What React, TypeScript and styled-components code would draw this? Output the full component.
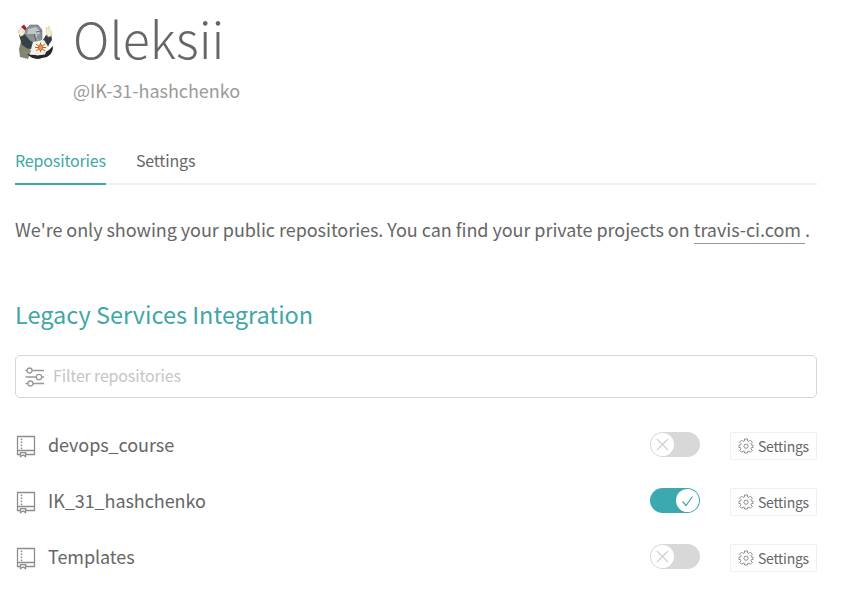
import React from "react";
import styled, { createGlobalStyle } from "styled-components";

const teal = "#3fa7a5";
const toggleTeal = "#3ba9af";
const Global = createGlobalStyle`
  *{box-sizing:border-box}
  body{margin:0;background:#fff;color:#666666;font-family:"Source Sans Pro","Noto Sans CJK SC",sans-serif;overflow:hidden}
`;
const Page = styled.main`width:802px;margin-left:15px;height:603px;display:flex;flex-direction:column;`;
const Header = styled.header`display:flex;height:144px;padding-top:6px;`;
const Avatar = styled.svg`width:40px;height:40px;margin:16px 17px 0 1px;flex:none;`;
const Identity = styled.div`display:flex;flex-direction:column;`;
const Name = styled.h1`margin:0;font-size:50px;font-weight:300;letter-spacing:.1px;line-height:62px;height:71px;white-space:nowrap;`;
const Handle = styled.span`font-size:18px;letter-spacing:-.04px;line-height:26px;color:#9b9b9b;white-space:nowrap;`;
const Tabs = styled.nav`display:flex;gap:30px;height:41px;border-bottom:2px solid #efefef;flex:none;`;
const Tab = styled.a<{ $active?: boolean }>`
  font-size:16px;letter-spacing:-.16px;line-height:32px;height:41px;white-space:nowrap;
  color:${p => (p.$active ? teal : "inherit")};
  border-bottom:2px solid ${p => (p.$active ? teal : "transparent")};
`;
const Notice = styled.p`margin:30px 0 0;font-size:18px;letter-spacing:-.045px;line-height:28px;white-space:nowrap;height:28px;`;
const NoticeLink = styled.a`display:inline-block;line-height:28px;height:29px;vertical-align:top;border-bottom:1px solid #999;white-space:pre;`;
const Heading = styled.h2`margin:54px 0 0;font-size:23.5px;font-weight:400;line-height:34px;height:58px;color:${teal};white-space:nowrap;`;
const Filter = styled.label`display:flex;align-items:center;height:43px;border:1px solid #d4d6d8;border-radius:5px;padding-left:9px;gap:8px;flex:none;`;
const FilterInput = styled.input`
  border:0;outline:0;padding:0 0 3px;background:none;font:16px/24px "Source Sans Pro","Noto Sans CJK SC",sans-serif;letter-spacing:-.17px;flex:1;
  &::placeholder{color:#c5c5c5;opacity:1}
`;
const List = styled.ul`list-style:none;margin:20px 0 0;padding:0;`;
const Row = styled.li`display:flex;align-items:center;height:56px;`;
const RepoName = styled.span`flex:1;margin-left:12px;padding-bottom:4px;font-size:18px;letter-spacing:-.07px;line-height:28px;white-space:nowrap;`;
const Switch = styled.button<{ $on: boolean }>`
  width:50px;height:25px;border:0;border-radius:13px;padding:1px;margin:0 30px 3px 0;display:flex;
  justify-content:${p => (p.$on ? "flex-end" : "flex-start")};
  background:${p => (p.$on ? toggleTeal : "#d8d8d8")};
`;
const Knob = styled.span`width:23px;height:23px;border-radius:50%;background:#fff;display:flex;`;
const SettingsButton = styled.button`
  width:87px;height:28px;border:1px solid #efefef;border-radius:2px;background:#fff;padding:0 0 0 7px;
  display:flex;align-items:center;gap:4px;color:inherit;font:14px/24px "Source Sans Pro","Noto Sans CJK SC",sans-serif;letter-spacing:-.27px;
`;

const FilterIcon = () => (
  <svg width="20" height="22" viewBox="0 0 20 22" fill="none" stroke="#999" strokeWidth="1.3">
    <path d="M.5 4.500H2M7 4.500h12M.5 11H11M17 11h2M.5 17.500H3M8 17.500h11" />
    <circle cx="4.500" cy="4.500" r="2.500" /><circle cx="14" cy="11" r="2.700" /><circle cx="5.500" cy="17.500" r="2.500" />
  </svg>
);
const RepoIcon = () => (
  <svg width="21" height="24" viewBox="0 0 21 24" fill="none" stroke="#8d8d8d" strokeWidth="1.3">
    <path d="M5.500 20.500h-3v-18h17v18h-9M2.500 16.500h17" />
    <path d="M6.500 4.500v11" strokeDasharray="1.5 1.500" strokeWidth="1.500" />
    <path d="M5.500 18v4.500l2.500-1.500 2.500 1.500V18M5 18.700h6.500" />
  </svg>
);
const GearIcon = () => (
  <svg width="16" height="16" viewBox="0 0 16 16" fill="none" stroke="#8d8d8d" strokeWidth="1">
    <path strokeLinejoin="round" d="M6.500 1h3v1.900l1.400.600 1.400-1.400 2.100 2.100L13 5.600l.6 1.400h1.400v2.500h-1.400l-.6 1.400 1.400 1.400-2.100 2.100-1.400-1.400-1.400.6V15h-3v-1.400l-1.400-.6-1.400 1.400-2.100-2.100L3 10.900l-.6-1.400H1V7h1.400L3 5.600 1.600 4.200l2.100-2.100 1.400 1.400 1.400-.6z" />
    <circle cx="8" cy="8.200" r="2.100" />
  </svg>
);
const KnobIcon = ({ on }: { on: boolean }) => (
  <svg width="23" height="23" viewBox="0 0 23 23" fill="none" stroke={on ? toggleTeal : "#cfcfcf"} strokeWidth="1.2">
    <path d={on ? "M6.500 12.500l3.500 4L16.500 7.500" : "M6 6l11 11M17 6L6 17"} />
  </svg>
);
const AvatarArt = () => (
  <Avatar viewBox="0 0 40 40">
    <path d="M5 19l-2 8 1 8 8 2 3-8-5-10z" fill="#83856e" />
    <path d="M9 15l8 5 8 0 5-6 4 3-2 8-8 3-10-1-6-6z" fill="#235c36" />
    <path d="M3 13l5-2 5 6 3 8-4 2-6-4z" fill="#384149" />
    <path d="M29 14l6-3 1 7-4 6-4-3z" fill="#343d45" />
    <path d="M2.500 8l2-2 2 2 2 3-1 2-3 1.500-2-4z" fill="#f5eccf" stroke="#b6ae91" strokeWidth=".5" />
    <path d="M30 5l2 2 1-3 1 4 2 2-1 4-3 1-2-5z" fill="#f5eccf" stroke="#c9bf9b" strokeWidth=".5" />
    <path d="M5 5l3-2.500 3 4-2 2z" fill="#a51f2b" />
    <path d="M9 8l5-5 8 0 4 5 0 9-5 5-7-4-4-4z" fill="#8a9095" stroke="#656b70" strokeWidth=".6" />
    <path d="M12 7l8-2 4 4-2 10-3-7-8 0z" fill="#c1c5c7" />
    <path d="M20 10l5-1M18 12l2 7M22 12v5" stroke="#50565b" strokeWidth=".8" />
    <path d="M17 20l11-2 5 8-5 9-12 0-1-8z" fill="#f5f1e6" />
    <path d="M24.500 20.500v10M20 22l9 7M29 22l-9 7M19 25.500h11" stroke="#c2602e" strokeWidth="1" />
    <ellipse cx="24.500" cy="25.500" rx="2" ry="3" fill="#e79b38" stroke="#ba4a22" strokeWidth=".7" />
    <path d="M11 32q16 4 26-8 0 11-11 12-8 3-15-4z" fill="#25272a" />
    <path d="M15 31l15-1-1 2.500-8 1z" fill="#eeeeea" />
  </Avatar>
);

const repos = [
  { name: "devops_course", on: false },
  { name: "IK_31_hashchenko", on: true },
  { name: "Templates", on: false },
];

export default function App() {
  return (
    <Page>
      <Global />
      <Header>
        <AvatarArt />
        <Identity><Name>Oleksii</Name><Handle>@IK-31-hashchenko</Handle></Identity>
      </Header>
      <Tabs><Tab $active>Repositories</Tab><Tab>Settings</Tab></Tabs>
      <Notice>We're only showing your public repositories. You can find your private projects on <NoticeLink>{"travis-ci.com "}</NoticeLink>.</Notice>
      <Heading>Legacy Services Integration</Heading>
      <Filter><FilterIcon /><FilterInput placeholder="Filter repositories" /></Filter>
      <List>
        {repos.map(repo => (
          <Row key={repo.name}>
            <RepoIcon />
            <RepoName>{repo.name}</RepoName>
            <Switch $on={repo.on} aria-label={repo.name}><Knob><KnobIcon on={repo.on} /></Knob></Switch>
            <SettingsButton><GearIcon />Settings</SettingsButton>
          </Row>
        ))}
      </List>
    </Page>
  );
}
